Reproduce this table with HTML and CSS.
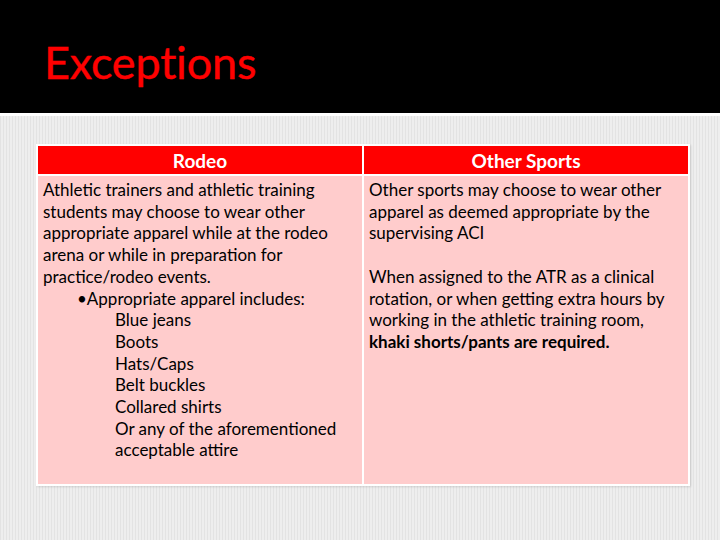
FILE: index.html
```html
<!DOCTYPE html>
<html>
<head>
<meta charset="utf-8">
<link rel="stylesheet" href="styles.css">
</head>
<body>
<header class="top">
  <h1 class="title">Exceptions</h1>
</header>
<div class="rule"></div>
<main class="stage">
  <div class="grid">
    <div class="head">Rodeo</div>
    <div class="head">Other Sports</div>
    <div class="cell">
      <p>Athletic trainers and athletic training<br>students may choose to wear other<br>appropriate apparel while at the rodeo<br>arena or while in preparation for<br>practice/rodeo events.</p>
      <p class="bullet">•Appropriate apparel includes:</p>
      <ul class="items">
        <li>Blue jeans</li>
        <li>Boots</li>
        <li>Hats/Caps</li>
        <li>Belt buckles</li>
        <li>Collared shirts</li>
        <li>Or any of the aforementioned<br>acceptable attire</li>
      </ul>
    </div>
    <div class="cell">
      <p>Other sports may choose to wear other<br>apparel as deemed appropriate by the<br>supervising ACI</p>
      <p class="gap">When assigned to the ATR as a clinical<br>rotation, or when getting extra hours by<br>working in the athletic training room,<br><b>khaki shorts/pants are required.</b></p>
    </div>
  </div>
</main>
</body>
</html>
```
FILE: styles.css
```css
html, body {
  margin: 0;
  padding: 0;
}
body {
  width: 720px;
  height: 540px;
  overflow: hidden;
  font-family: Lato, "Open Sans", sans-serif;
  background: repeating-linear-gradient(90deg, #e3e3e3 0 1px, #eeeeee 1px 3px);
}
.top {
  height: 113px;
  background: #000;
  display: flex;
  align-items: flex-start;
}
.title {
  margin: 37px 0 0 44px;
  font-size: 45px;
  line-height: 50px;
  font-weight: 400;
  color: #f00;
  letter-spacing: -0.2px;
  -webkit-text-stroke: 0.4px #f00;
}
.rule {
  height: 3px;
  background: #fff;
}
.stage {
  padding: 28px 0 0 36px;
}
.grid {
  width: 650px;
  display: grid;
  grid-template-columns: 324px 324px;
  grid-template-rows: 28px 308px;
  gap: 2px;
  padding: 2px;
  background: #fff;
  box-shadow: 1px 1px 2px rgba(0,0,0,0.12);
}
.head {
  background: #f00;
  color: #fff;
  font-size: 19px;
  font-weight: 700;
  display: flex;
  align-items: center;
  justify-content: center;
}
.cell {
  background: #ffcccc;
  color: #000;
  font-size: 17px;
  line-height: 21.7px;
  padding: 3px 4px 0 5px;
  white-space: nowrap;
}
.cell p {
  margin: 0;
}
.bullet {
  padding-left: 34px;
}
.items {
  list-style: none;
  margin: 0;
  padding: 0 0 0 72px;
}
.gap {
  margin-top: 21.7px !important;
}
b {
  font-weight: 700;
}
```
